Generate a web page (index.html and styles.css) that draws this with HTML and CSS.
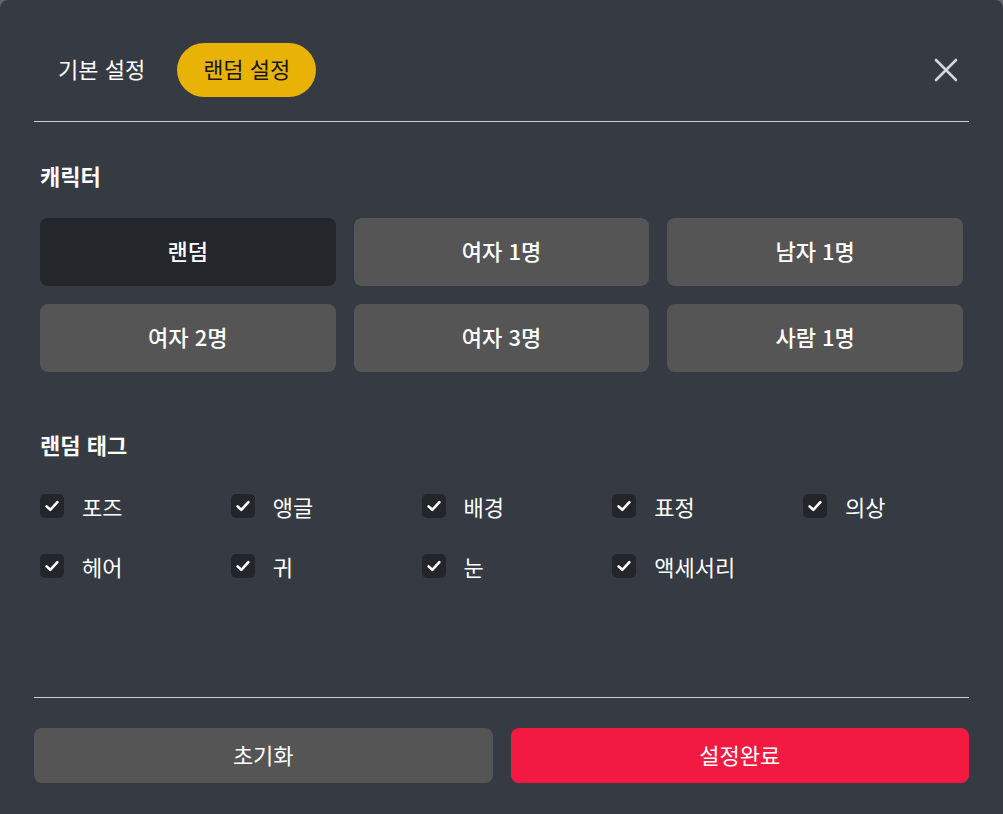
FILE: index.html
```html
<!DOCTYPE html>
<html lang="ko">
<head>
<meta charset="utf-8">
<link rel="stylesheet" href="styles.css">
</head>
<body>
<div class="modal">
  <header class="header">
    <div class="tabs">
      <button class="tab">기본 설정</button>
      <button class="tab active">랜덤 설정</button>
    </div>
    <button class="close" aria-label="닫기">
      <svg width="24" height="24" viewBox="0 0 24 24"><path d="M2 2 L22 22 M22 2 L2 22" stroke="#d4d6da" stroke-width="2.6" stroke-linecap="round"/></svg>
    </button>
  </header>
  <main class="content">
    <h2 class="title">캐릭터</h2>
    <div class="grid">
      <button class="opt selected">랜덤</button>
      <button class="opt">여자 1명</button>
      <button class="opt">남자 1명</button>
      <button class="opt">여자 2명</button>
      <button class="opt">여자 3명</button>
      <button class="opt">사람 1명</button>
    </div>
    <h2 class="title tags-title">랜덤 태그</h2>
    <div class="tags">
      <label class="tag"><span class="box"><svg width="16" height="16" viewBox="0 0 16 16"><path d="M2.6 8.4 L6.3 11.8 L13.4 4.2" fill="none" stroke="#fff" stroke-width="2.6" stroke-linecap="round" stroke-linejoin="round"/></svg></span>포즈</label>
      <label class="tag"><span class="box"><svg width="16" height="16" viewBox="0 0 16 16"><path d="M2.6 8.4 L6.3 11.8 L13.4 4.2" fill="none" stroke="#fff" stroke-width="2.6" stroke-linecap="round" stroke-linejoin="round"/></svg></span>앵글</label>
      <label class="tag"><span class="box"><svg width="16" height="16" viewBox="0 0 16 16"><path d="M2.6 8.4 L6.3 11.8 L13.4 4.2" fill="none" stroke="#fff" stroke-width="2.6" stroke-linecap="round" stroke-linejoin="round"/></svg></span>배경</label>
      <label class="tag"><span class="box"><svg width="16" height="16" viewBox="0 0 16 16"><path d="M2.6 8.4 L6.3 11.8 L13.4 4.2" fill="none" stroke="#fff" stroke-width="2.6" stroke-linecap="round" stroke-linejoin="round"/></svg></span>표정</label>
      <label class="tag"><span class="box"><svg width="16" height="16" viewBox="0 0 16 16"><path d="M2.6 8.4 L6.3 11.8 L13.4 4.2" fill="none" stroke="#fff" stroke-width="2.6" stroke-linecap="round" stroke-linejoin="round"/></svg></span>의상</label>
      <label class="tag"><span class="box"><svg width="16" height="16" viewBox="0 0 16 16"><path d="M2.6 8.4 L6.3 11.8 L13.4 4.2" fill="none" stroke="#fff" stroke-width="2.6" stroke-linecap="round" stroke-linejoin="round"/></svg></span>헤어</label>
      <label class="tag"><span class="box"><svg width="16" height="16" viewBox="0 0 16 16"><path d="M2.6 8.4 L6.3 11.8 L13.4 4.2" fill="none" stroke="#fff" stroke-width="2.6" stroke-linecap="round" stroke-linejoin="round"/></svg></span>귀</label>
      <label class="tag"><span class="box"><svg width="16" height="16" viewBox="0 0 16 16"><path d="M2.6 8.4 L6.3 11.8 L13.4 4.2" fill="none" stroke="#fff" stroke-width="2.6" stroke-linecap="round" stroke-linejoin="round"/></svg></span>눈</label>
      <label class="tag"><span class="box"><svg width="16" height="16" viewBox="0 0 16 16"><path d="M2.6 8.4 L6.3 11.8 L13.4 4.2" fill="none" stroke="#fff" stroke-width="2.6" stroke-linecap="round" stroke-linejoin="round"/></svg></span>액세서리</label>
    </div>
  </main>
  <footer class="footer">
    <button class="btn reset">초기화</button>
    <button class="btn done">설정완료</button>
  </footer>
</div>
</body>
</html>
```

FILE: styles.css
```css
* { box-sizing: border-box; }
html, body { margin: 0; padding: 0; }
body {
  background: #62656d;
  font-family: "Noto Sans CJK KR", "Noto Sans", sans-serif;
  color: #ffffff;
  width: 1003px;
  height: 814px;
  overflow: hidden;
}
button {
  font-family: inherit;
  border: none;
  cursor: pointer;
  padding: 0;
}
.modal {
  width: 1003px;
  height: 814px;
  background: #363a42;
  border-radius: 8px 8px 0 0;
  padding: 0 34px;
  display: flex;
  flex-direction: column;
}
.header {
  display: flex;
  align-items: center;
  justify-content: space-between;
  padding: 43px 0 24px;
  border-bottom: 1px solid #cfd0d2;
}
.tabs {
  display: flex;
  gap: 8px;
}
.tab {
  height: 54px;
  padding: 0 24px 3px;
  border-radius: 27px;
  background: transparent;
  color: #ffffff;
  font-size: 22px;
  line-height: 51px;
}
.tab.active {
  padding: 0 26px 3px;
  background: #e8b306;
  color: #15171a;
}
.close {
  background: transparent;
  width: 24px;
  height: 24px;
  margin-right: 11px;
  display: flex;
}
.content {
  flex: 1;
  padding: 0 6px;
}
.title {
  margin: 0;
  font-size: 22px;
  font-weight: 700;
  line-height: 28px;
  padding-top: 39px;
}
.grid {
  margin-top: 29px;
  display: grid;
  grid-template-columns: repeat(3, 1fr);
  gap: 18px;
}
.opt {
  height: 68px;
  padding-bottom: 4px;
  border-radius: 8px;
  background: #555555;
  color: #ffffff;
  font-size: 22px;
  font-weight: 500;
}
.opt.selected {
  background: #23272c;
}
.tags-title {
  padding-top: 58px;
}
.tags {
  margin-top: 30px;
  display: grid;
  grid-template-columns: repeat(5, 190.75px);
  row-gap: 24px;
}
.tag {
  height: 36px;
  display: flex;
  align-items: center;
  gap: 18px;
  font-size: 22px;
  color: #ffffff;
  padding-bottom: 1px;
}
.box {
  flex: none;
  width: 24px;
  height: 24px;
  border-radius: 5px;
  background: #22252a;
  display: flex;
  align-items: center;
  justify-content: center;
}
.footer {
  border-top: 1px solid #cfd0d2;
  padding: 30px 0 31px;
  display: flex;
  gap: 18px;
}
.btn {
  flex: 1;
  height: 55px;
  padding-bottom: 3px;
  border-radius: 8px;
  color: #ffffff;
  font-size: 22px;
}
.reset { background: #555555; }
.done { background: #f21a40; }
```
